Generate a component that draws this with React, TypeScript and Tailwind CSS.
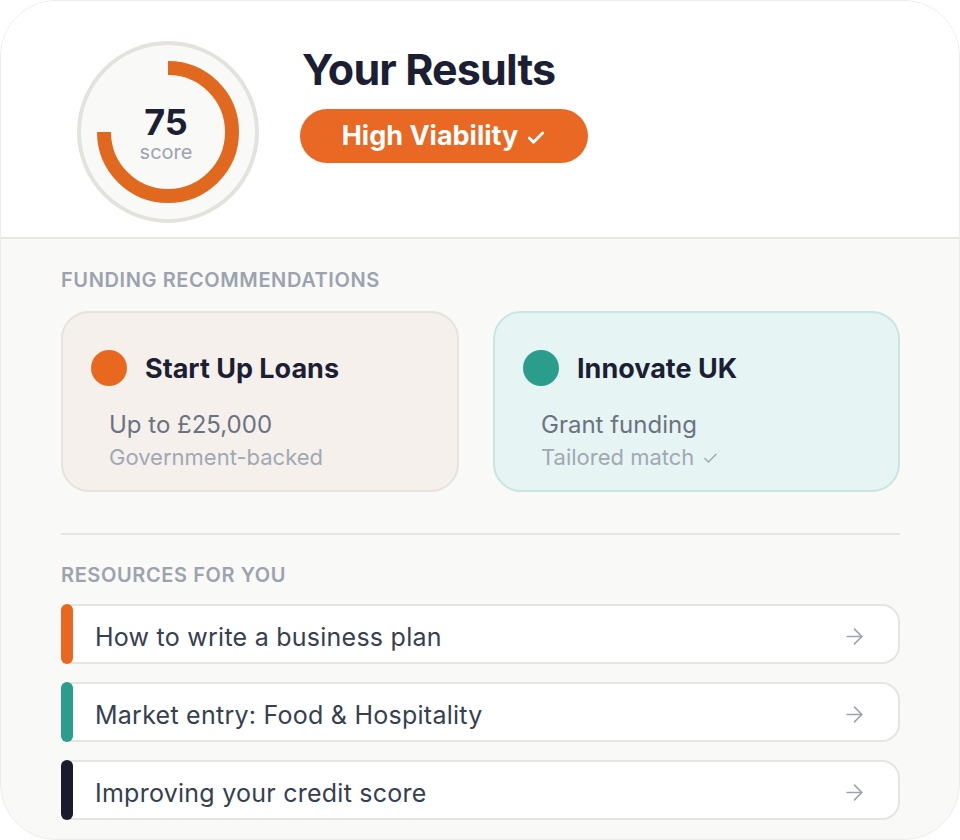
import { ArrowRight, Check } from "lucide-react";

const funding = [
  {
    title: "Start Up Loans",
    amount: "Up to £25,000",
    note: "Government-backed",
    dot: "bg-[#e8681f]",
    box: "bg-[#f5f0ec] border-[#e6e2dc] w-[398px]",
    check: false,
  },
  {
    title: "Innovate UK",
    amount: "Grant funding",
    note: "Tailored match",
    dot: "bg-[#2a9d8c]",
    box: "bg-[#e6f4f3] border-[#c7e6e2] flex-1",
    check: true,
  },
];

const resources = [
  { text: "How to write a business plan", bar: "bg-[#e8681f]" },
  { text: "Market entry: Food & Hospitality", bar: "bg-[#2a9d8c]" },
  { text: "Improving your credit score", bar: "bg-[#1a1b2e]" },
];

function ScoreRing() {
  return (
    <div className="relative w-[182px] h-[182px] shrink-0">
      <svg width="182" height="182" viewBox="0 0 182 182" className="absolute inset-0">
        <circle cx="91" cy="91" r="89" fill="#f9f9f7" stroke="#e4e2dd" strokeWidth="4" />
        <path d="M 91 27 A 64 64 0 1 1 27 91" fill="none" stroke="#e0691f" strokeWidth="14" />
      </svg>
      <div className="absolute inset-0 flex flex-col items-center justify-center pr-[4px] pt-[4px]">
        <span className="text-[36px] leading-[36px] font-bold text-[#1c1f33]">75</span>
        <span className="text-[20px] leading-[24px] text-[#9ca3af]">score</span>
      </div>
    </div>
  );
}

export default function App() {
  return (
    <div
      className="w-[960px] h-[840px] rounded-[56px] overflow-hidden border border-[#ececec] bg-[#f9f9f7] flex flex-col"
      style={{ fontFamily: "Inter, 'Noto Sans', sans-serif" }}
    >
      {/* header */}
      <div className="bg-white border-b-2 border-[#e6e5e2] h-[238px] flex items-start pl-[76px] pt-[40px] gap-[43px]">
        <ScoreRing />
        <div className="flex flex-col items-start pt-[2px]">
          <h1 className="text-[43px] leading-[52px] font-bold tracking-[-0.02em] text-[#1c1f33]">Your Results</h1>
          <div className="mt-[14px] h-[54px] w-[288px] -ml-[2px] rounded-full bg-[#e86824] flex items-center justify-center gap-[8px] text-white">
            <span className="text-[27px] font-bold">High Viability</span>
            <Check size={20} strokeWidth={3.5} className="mt-[3px]" />
          </div>
        </div>
      </div>

      {/* body */}
      <div className="flex-1 pl-[60px] pr-[59px] pt-[29px]">
        <p className="text-[20px] leading-[24px] font-semibold tracking-[0.03em] text-[#9ca3af] uppercase">Funding Recommendations</p>

        <div className="mt-[19px] flex gap-[34px]">
          {funding.map((f) => (
            <div key={f.title} className={`${f.box} h-[181px] border-2 rounded-[28px] pl-[28px] pt-[35px]`}>
              <div className="flex items-center gap-[18px]">
                <span className={`${f.dot} w-[36px] h-[36px] rounded-full`} />
                <span className="text-[27px] leading-[36px] font-bold text-[#1c1f33] pt-[3px]">{f.title}</span>
              </div>
              <div className="pl-[18px] mt-[23px]">
                <p className="text-[24px] leading-[30px] text-[#6b7280]">{f.amount}</p>
                <p className="mt-[4px] text-[22px] leading-[26px] text-[#a1a8b3] flex items-center gap-[8px]">
                  {f.note}
                  {f.check && <Check size={17} strokeWidth={2} className="mt-[2px]" />}
                </p>
              </div>
            </div>
          ))}
        </div>

        <div className="mt-[41px] h-[2px] bg-[#e6e5e2]" />

        <p className="mt-[28px] text-[20px] leading-[24px] font-semibold tracking-[0.03em] text-[#9ca3af] uppercase">Resources For You</p>

        <div className="mt-[17px] flex flex-col gap-[18px]">
          {resources.map((r) => (
            <div key={r.text} className="flex h-[60px]">
              <span className={`${r.bar} w-[12px] rounded-full shrink-0 z-10`} />
              <div className="-ml-[4px] flex-1 flex items-center justify-between bg-white border-2 border-l-0 border-[#e6e5e2] rounded-r-[18px] pl-[26px] pr-[31px]">
                <span className="text-[25px] leading-[30px] tracking-[0.01em] text-[#36404f] pt-[5px]">{r.text}</span>
                <ArrowRight size={25} strokeWidth={1.6} className="text-[#9ca3af] mt-[4px]" />
              </div>
            </div>
          ))}
        </div>
      </div>
    </div>
  );
}
